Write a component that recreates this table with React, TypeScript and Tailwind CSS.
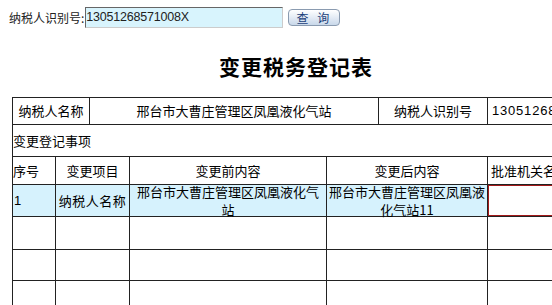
import React from "react";

const cn = "font-['Noto_Sans_CJK_SC','Liberation_Sans',sans-serif]";

const App = () => {
  return (
    <div className={`w-[552px] h-[305px] overflow-hidden bg-white text-black ${cn}`}>
      <div className="w-[600px]">
        {/* query bar */}
        <div className="flex items-center pt-[7px] pl-[9px] h-[28px]">
          <span className="text-[12px] leading-none text-[#222]">纳税人识别号:</span>
          <div className="ml-[1px] w-[198px] h-[21px] bg-[#d8f4fd] border border-t-[#666] border-l-[#666] border-b-[#ccc] border-r-[#ccc] flex items-center">
            <span className="text-[12.5px] leading-none font-['Liberation_Sans',sans-serif] text-[#222] tracking-[-0.2px]">
              13051268571008X
            </span>
          </div>
          <button className="ml-[5px] w-[52px] h-[17px] rounded-[4px] border border-[#8a9bb0] bg-gradient-to-b from-[#ffffff] to-[#c9d8ea] text-[12px] leading-none text-[#1b3f7a] tracking-[3px]">
            查 询
          </button>
        </div>

        {/* title */}
        <div className="w-[592px] text-center mt-[26px] text-[21px] leading-[24px] font-bold tracking-[1px]">
          变更税务登记表
        </div>

        {/* taxpayer row */}
        <div className="ml-[12px] mt-[19px] border-l border-t border-[#222] text-[13px]">
          <div className="flex h-[27px]">
            <div className="w-[77px] border-r border-b border-[#222] flex items-center justify-center">纳税人名称</div>
            <div className="w-[289px] border-r border-b border-[#222] flex items-center justify-center">
              邢台市大曹庄管理区凤凰液化气站
            </div>
            <div className="w-[109px] border-r border-b border-[#222] flex items-center justify-center">纳税人识别号</div>
            <div className="w-[82px] border-r border-b border-[#222] flex items-center pl-[4px] font-['Liberation_Sans',sans-serif] tracking-[0.8px]">
              130512685
            </div>
          </div>

          <div className="h-[32px] w-[557px] border-r border-b border-[#222] flex items-center">变更登记事项</div>

          <div className="flex h-[28px]">
            <div className="w-[43px] border-r border-b border-[#222] flex items-center">序号</div>
            <div className="w-[74px] border-r border-b border-[#222] flex items-center justify-center">变更项目</div>
            <div className="w-[197px] border-r border-b border-[#222] flex items-center justify-center">变更前内容</div>
            <div className="w-[161px] border-r border-b border-[#222] flex items-center justify-center">变更后内容</div>
            <div className="w-[82px] border-r border-b border-[#222] flex items-center pl-[3px] whitespace-nowrap overflow-hidden">批准机关名称</div>
          </div>

          <div className="flex h-[32px] leading-[18px]">
            <div className="w-[43px] border-r border-b border-[#222] bg-[#d6f2fd] flex items-center pl-[1px] font-['Liberation_Sans',sans-serif]">1</div>
            <div className="w-[74px] border-r border-b border-[#222] bg-[#d6f2fd] flex items-center justify-center tracking-[0.5px]">纳税人名称</div>
            <div className="w-[197px] border-r border-b border-[#222] bg-[#d6f2fd] flex items-center justify-center text-center">
              邢台市大曹庄管理区凤凰液化气
              <br />站
            </div>
            <div className="w-[161px] border-r border-b border-[#222] bg-[#d6f2fd] flex flex-col items-center justify-center text-center">
              <span>邢台市大曹庄管理区凤凰液</span>
              <span>化气站11</span>
            </div>
            <div className="w-[82px] border-r border-b border-[#222] bg-white shadow-[inset_1px_1px_0_0_#a31a1a,inset_0_-1px_0_0_#a31a1a]"></div>
          </div>

          {[33, 31, 32].map((h, i) => (
            <div key={i} className="flex" style={{ height: h }}>
              <div className="w-[43px] border-r border-b border-[#222]"></div>
              <div className="w-[74px] border-r border-b border-[#222]"></div>
              <div className="w-[197px] border-r border-b border-[#222]"></div>
              <div className="w-[161px] border-r border-b border-[#222]"></div>
              <div className="w-[82px] border-r border-b border-[#222]"></div>
            </div>
          ))}
        </div>
      </div>
    </div>
  );
};

export default App;
